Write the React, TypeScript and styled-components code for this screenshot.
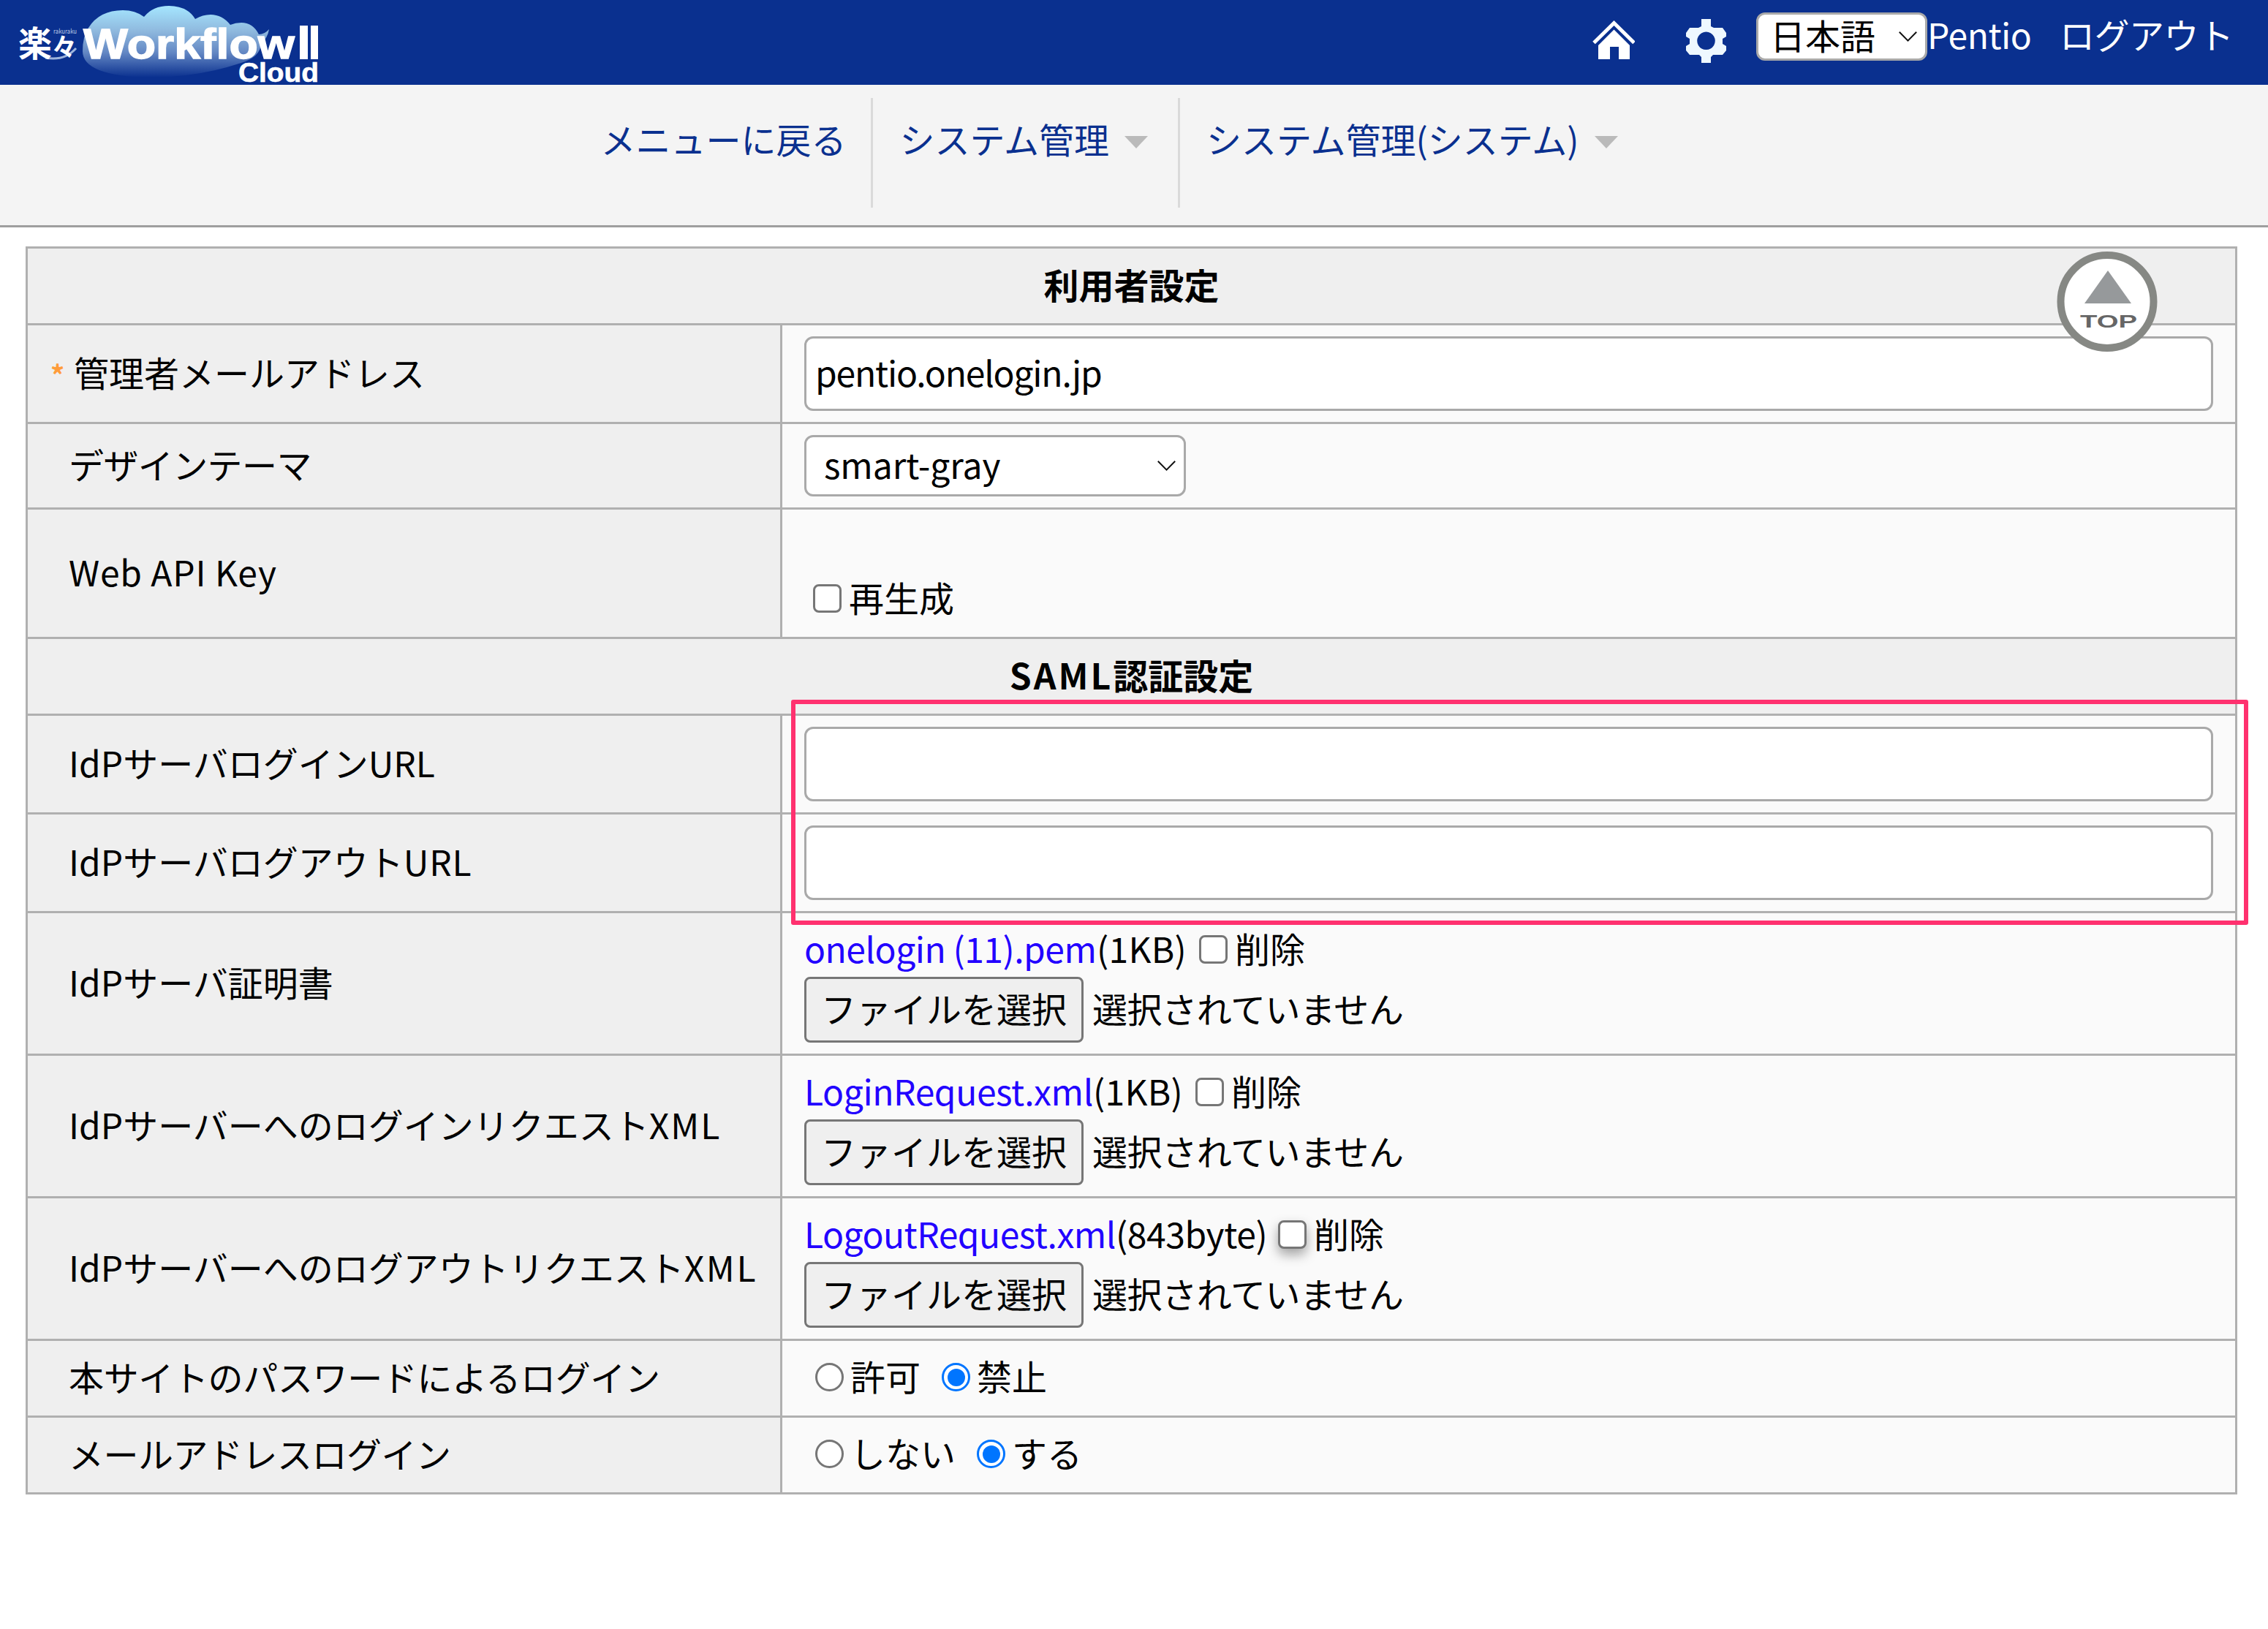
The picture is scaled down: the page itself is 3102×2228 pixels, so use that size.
import React from "react";
import styled, { createGlobalStyle, css } from "styled-components";

const LINE = "#b0b0b0";
const NAVY = "#0a308f";
const FONT = '"Noto Sans CJK JP", "Liberation Sans", sans-serif';

const GlobalStyle = createGlobalStyle`
  *, *::before, *::after { box-sizing: border-box; }
  body { margin: 0; background: #fff; color: #000; font: 48px/72px ${FONT}; }
`;

const Page = styled.div`
  position: relative;
  min-height: 2228px;
  display: flex;
  flex-direction: column;
`;

const Run = styled.span<{ $ls?: number; $w?: number }>`
  ${(p) => p.$w && `flex: none; width: ${p.$w}px;`}
  letter-spacing: ${(p) => p.$ls ?? 0}px;
  white-space: pre;
`;

/* ---------- header ---------- */

const Header = styled.header`
  display: flex;
  justify-content: space-between;
  height: 116px;
  background: ${NAVY};
  color: #fff;
`;

const Logo = styled.svg`
  display: block;
  width: 480px;
  height: 116px;
  overflow: visible;
`;

const Tools = styled.div`
  display: flex;
  align-items: flex-start;
  padding-right: 45px;
`;

const HomeIcon = styled.svg`
  width: 58px;
  height: 54px;
  margin: 28px 70px 0 0;
`;

const GearIcon = styled.svg`
  width: 55px;
  height: 60px;
  margin: 26px 41px 0 0;
`;

const Select = styled.div<{ $w: number; $h: number; $pad: number }>`
  display: flex;
  align-items: center;
  justify-content: space-between;
  width: ${(p) => p.$w}px;
  height: ${(p) => p.$h}px;
  padding: 0 11px 0 ${(p) => p.$pad}px;
  border: 3px solid #a9a9a9;
  border-radius: 12px;
  background: #fff;
  color: #000;
`;

const SelectValue = styled.span`
  padding-bottom: 7px;
`;

const LangSelect = styled(Select)`
  margin-top: 17px;
`;

const Chevron = styled.svg`
  width: 25px;
  height: 14px;
`;

const UserName = styled.span`
  width: 181px;
  padding-top: 10px;
`;

const Logout = styled.a`
  width: 240px;
  padding-top: 10px;
  letter-spacing: -0.5px;
`;

/* ---------- navigation ---------- */

const Nav = styled.nav`
  display: flex;
  justify-content: center;
  height: 195px;
  padding: 18px 63px 0 0;
  border-bottom: 3px solid #9e9e9e;
  background: #f4f4f4;
  color: ${NAVY};
`;

const NavItem = styled.a<{ $first?: boolean; $last?: boolean }>`
  display: flex;
  align-items: flex-start;
  height: 150px;
  padding: 19px ${(p) => (p.$first ? 34 : 41)}px 0 36px;
  border-right: ${(p) => (p.$last ? "0" : "3px solid #dadada")};
`;

const Caret = styled.span`
  width: 0;
  height: 0;
  margin: 33px 0 0 21px;
  border: 16px solid transparent;
  border-top: 17px solid #bababa;
  border-bottom: 0;
`;

/* ---------- settings table ---------- */

const Table = styled.main`
  width: 3025px;
  margin: 26px 0 0 35px;
  border: solid ${LINE};
  border-width: 3px 3px 0;
`;

const Heading = styled.h2`
  height: 105px;
  margin: 0;
  padding-top: 12px;
  border-bottom: 3px solid ${LINE};
  background: #efefef;
  font-size: 48px;
  font-weight: 700;
  line-height: 72px;
  text-align: center;
`;

const Row = styled.div<{ $h: number }>`
  display: grid;
  grid-template-columns: 1032px 1fr;
  height: ${(p) => p.$h}px;
  border-bottom: 3px solid ${LINE};
`;

const Label = styled.div<{ $required?: boolean; $ls?: number }>`
  display: flex;
  align-items: center;
  padding: 0 0 7px ${(p) => (p.$required ? 31 : 56)}px;
  border-right: 3px solid ${LINE};
  background: #efefef;
  letter-spacing: ${(p) => p.$ls ?? 0}px;
`;

const Star = styled.span`
  width: 32px;
  padding-top: 8px;
  color: #ff9c3a;
  font-size: 38px;
  font-weight: 700;
`;

const Cell = styled.div<{ $pad?: string }>`
  padding: ${(p) => p.$pad ?? "15px 30px"};
  background: #fafafa;
`;

const TextField = styled.div`
  display: flex;
  align-items: center;
  height: 102px;
  padding: 0 0 7px 12px;
  border: 3px solid #a9a9a9;
  border-radius: 12px;
  background: #fff;
`;

const Line = styled.div`
  display: flex;
  align-items: center;
`;

const FileLine = styled(Line)`
  margin-top: 4px;
`;

const Check = styled.span<{ $shadow?: boolean }>`
  flex: none;
  width: 39px;
  height: 39px;
  margin: 5px 10px 0 0;
  border: 3px solid #767676;
  border-radius: 8px;
  background: #fff;
  ${(p) =>
    p.$shadow &&
    css`
      box-shadow: 0 8px 16px rgba(0, 0, 0, 0.35);
    `}
`;

const Radio = styled.span<{ $on?: boolean; $start: number }>`
  display: flex;
  align-items: center;
  justify-content: center;
  width: 39px;
  height: 39px;
  margin: 5px 9px 0 ${(p) => p.$start}px;
  border: 3px solid ${(p) => (p.$on ? "#0075ff" : "#767676")};
  border-radius: 50%;
  background: #fff;
  &::after {
    content: "";
    width: 24px;
    height: 24px;
    border-radius: 50%;
    background: ${(p) => (p.$on ? "#0075ff" : "transparent")};
  }
`;

const FileLink = styled.a`
  display: flex;
  color: #2200ff;
`;

const FileButton = styled.span`
  display: flex;
  align-items: center;
  justify-content: center;
  width: 382px;
  height: 90px;
  margin-right: 12px;
  padding-bottom: 6px;
  border: 3px solid #767676;
  border-radius: 8px;
  background: #efefef;
`;

const FileHint = styled.span`
  padding-bottom: 6px;
  letter-spacing: -0.4px;
`;

/* ---------- overlays ---------- */

const TopButton = styled.svg`
  position: absolute;
  left: 2813px;
  top: 343px;
  width: 138px;
  height: 139px;
`;

const Highlight = styled.div`
  position: absolute;
  left: 1082px;
  top: 957px;
  width: 1993px;
  height: 308px;
  border: 6px solid #ff316f;
  border-radius: 3px;
`;

const ChevronDown = () => (
  <Chevron viewBox="0 0 25 14" fill="none" stroke="#111" strokeWidth="2">
    <path d="M0.8 0.8 L12.5 12.6 L24.2 0.8" />
  </Chevron>
);

type FileProps = {
  label: React.ReactNode;
  name: string;
  size: string;
  nameWidth: number;
  sizeWidth: number;
  nameLs: number;
  sizeLs: number;
  shadow?: boolean;
};

const FileRow = ({ label, name, size, nameWidth, sizeWidth, nameLs, sizeLs, shadow }: FileProps) => (
  <Row $h={195}>
    <Label>{label}</Label>
    <Cell $pad="11px 30px">
      <Line>
        <FileLink><Run $ls={nameLs} $w={nameWidth}>{name}</Run></FileLink>
        <Run $ls={sizeLs} $w={sizeWidth}>{size}</Run>
        <Check $shadow={shadow} />
        削除
      </Line>
      <FileLine>
        <FileButton>ファイルを選択</FileButton>
        <FileHint>選択されていません</FileHint>
      </FileLine>
    </Cell>
  </Row>
);

export default function App() {
  return (
    <Page>
      <GlobalStyle />
      <Header>
        <Logo viewBox="0 0 480 116">
          <defs>
            <linearGradient id="cloud" x1="0" y1="8" x2="0" y2="106" gradientUnits="userSpaceOnUse">
              <stop offset="0" stopColor="#a5e6ff" />
              <stop offset="0.35" stopColor="#8fb9de" />
              <stop offset="0.65" stopColor="#6488c4" />
              <stop offset="1" stopColor={NAVY} />
            </linearGradient>
          </defs>
          <path fill="url(#cloud)" d="M113 70 Q113 50 121 38 Q136 14 168 14 Q185 14 197 23 Q209 8 231 8 Q256 8 267 26 Q277 20 288 20 Q304 20 315 34 Q322 31 330 31 Q346 31 354 47 Q362 47 368 40 Q366 52 357 60 Q356 78 330 86 Q270 106 205 106 Q113 104 113 70Z" />
          <path d="M62 79 Q88 84 104 66" fill="none" stroke="#9db4dc" strokeWidth="3" />
          <g fill="#fff" fontFamily={FONT} fontWeight="700">
            <text x="25" y="77" fontSize="48" textLength="46" lengthAdjust="spacingAndGlyphs">楽</text>
            <text x="71" y="78" fontSize="36" textLength="34" lengthAdjust="spacingAndGlyphs">々</text>
            <text x="73" y="46" fontSize="9" fontWeight="400" fill="#b9c8e6" textLength="32" lengthAdjust="spacingAndGlyphs">rakuraku</text>
          </g>
          <g fill="#fff" stroke="#fff" fontFamily='"Liberation Sans", sans-serif' fontWeight="700">
            <text x="114" y="80" fontSize="58" strokeWidth="1.4" textLength="289" lengthAdjust="spacingAndGlyphs">Workflow</text>
            <text x="326" y="112" fontSize="36" strokeWidth="0.6" textLength="110" lengthAdjust="spacingAndGlyphs">Cloud</text>
          </g>
          <path fill="#fff" d="M410 35h11v46h-11zM425 35h10v46h-10z" />
        </Logo>
        <Tools>
          <HomeIcon viewBox="0 0 58 54">
            <path fill="none" stroke="#fff" strokeWidth="5" d="M2 30.5 L29.5 3.5 L57 30.5" />
            <path fill="#fff" d="M8 34 L29.5 12.5 L51 34 V53 H36 V36 H24 V53 H8Z" />
          </HomeIcon>
          <GearIcon viewBox="0 0 55 60">
            <path fill="#eef8ff" fillRule="evenodd" d="M21 0H34V10L38 12H50L55 19V24L50 27V34L55 37V43L50 49H37L34 52V60H21V52L18 49H5L0 43V37L5 34V27L0 24V19L5 12H17L21 10ZM27.5 17.5a12.3 12.3 0 1 0 0.01 0Z" />
          </GearIcon>
          <LangSelect $w={234} $h={66} $pad={16}>
            <SelectValue>日本語</SelectValue>
            <ChevronDown />
          </LangSelect>
          <UserName><Run $ls={-0.5}>Pentio</Run></UserName>
          <Logout>ログアウト</Logout>
        </Tools>
      </Header>

      <Nav>
        <NavItem $first>メニューに戻る</NavItem>
        <NavItem>システム管理<Caret /></NavItem>
        <NavItem $last>システム管理(システム)<Caret /></NavItem>
      </Nav>

      <Table>
        <Heading>利用者設定</Heading>
        <Row $h={135}>
          <Label $required><Star>*</Star>管理者メールアドレス</Label>
          <Cell><TextField><Run $ls={-1.2}>pentio.onelogin.jp</Run></TextField></Cell>
        </Row>
        <Row $h={117}>
          <Label $ls={-0.6}>デザインテーマ</Label>
          <Cell>
            <Select $w={522} $h={84} $pad={24}>
              <SelectValue><Run $ls={-0.1}>smart-gray</Run></SelectValue>
              <ChevronDown />
            </Select>
          </Cell>
        </Row>
        <Row $h={177}>
          <Label $ls={0.8}>Web API Key</Label>
          <Cell $pad="83px 42px 0"><Line><Check />再生成</Line></Cell>
        </Row>
        <Heading><Run $ls={3}>SAML</Run>認証設定</Heading>
        <Row $h={135}>
          <Label>IdPサーバログインURL</Label>
          <Cell><TextField /></Cell>
        </Row>
        <Row $h={135}>
          <Label>IdPサーバログアウト<Run $ls={0.8}>URL</Run></Label>
          <Cell><TextField /></Cell>
        </Row>
        <FileRow label="IdPサーバ証明書" name="onelogin (11).pem" size="(1KB)" nameWidth={400} sizeWidth={140} nameLs={-0.5} sizeLs={0.3} />
        <FileRow
          label={<>IdPサーバーへのログインリクエスト<Run $ls={2}>XML</Run></>}
          name="LoginRequest.xml" size="(1KB)" nameWidth={395} sizeWidth={140} nameLs={-0.4} sizeLs={0.3}
        />
        <FileRow
          label={<>IdPサーバーへのログアウトリクエスト<Run $ls={2.6}>XML</Run></>}
          name="LogoutRequest.xml" size="(843byte)" nameWidth={426} sizeWidth={222} nameLs={-0.5} sizeLs={-0.4} shadow
        />
        <Row $h={105}>
          <Label $ls={-0.35}>本サイトのパスワードによるログイン</Label>
          <Cell $pad="11px 30px"><Line><Radio $start={15} />許可<Radio $on $start={29} />禁止</Line></Cell>
        </Row>
        <Row $h={105}>
          <Label $ls={-0.5}>メールアドレスログイン</Label>
          <Cell $pad="11px 30px"><Line><Radio $start={15} />しない<Radio $on $start={29} />する</Line></Cell>
        </Row>
      </Table>

      <TopButton viewBox="0 0 138 139">
        <circle cx="69" cy="69.5" r="63.5" fill="#fff" stroke="#868884" strokeWidth="10" />
        <path d="M70 27 L102 72 H38Z" fill="#96999b" />
        <text x="32" y="104.5" fontFamily='"Liberation Sans", sans-serif' fontWeight="700" fontSize="24" fill="#666" textLength="78" lengthAdjust="spacingAndGlyphs">TOP</text>
      </TopButton>
      <Highlight />
    </Page>
  );
}
